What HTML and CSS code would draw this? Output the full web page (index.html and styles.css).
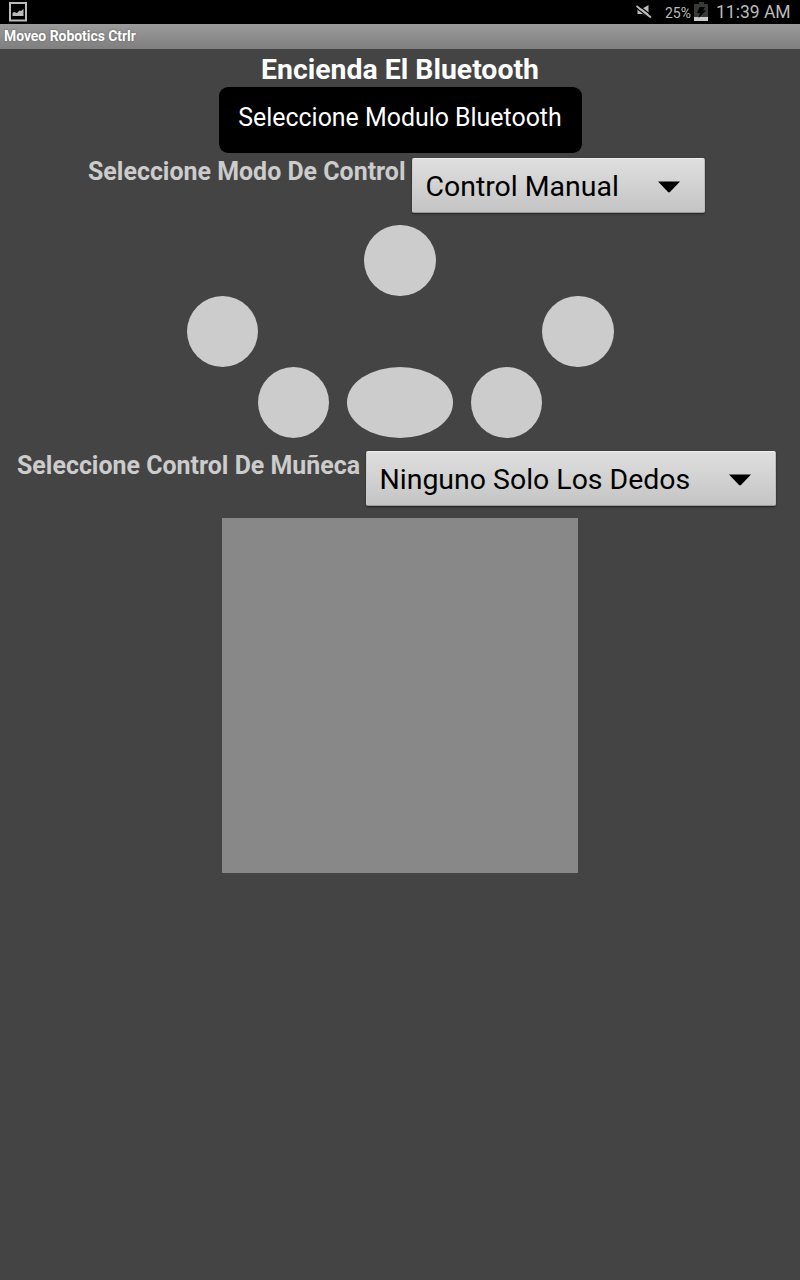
FILE: index.html
```html
<!DOCTYPE html>
<html lang="es">
<head>
<meta charset="utf-8">
<title>Moveo Robotics Ctrlr</title>
<link rel="stylesheet" href="styles.css">
</head>
<body>
<header class="status">
  <svg class="picture" width="18" height="20" viewBox="0 0 18 20"><path d="M1 1h16v17.500H1z" fill="none" stroke="#bbb" stroke-width="2"/><path d="M3.500 14v-3l1.500-1 3 1 2.500-2.500 1.500 .5 2.500-2V14z" fill="#bbb"/></svg>
  <svg class="mute" width="16" height="14" viewBox="0 0 16 14"><path d="M1.500 3.500h5l6-3.500v12.500L6.500 9h-5z" fill="#bbb"/><path d="M0 2.700l14 10.800" stroke="#000" stroke-width="1.400"/><path d="M2 0l14 10.800" stroke="#000" stroke-width="1.200"/><path d="M.5 1l14.500 11.500" stroke="#bbb" stroke-width="1.700"/></svg>
  <span class="percent">25%</span>
  <svg class="battery" width="15" height="19" viewBox="0 0 15 19"><path d="M0 2h5V0h5v2h4v17H0z" fill="#393939"/><path d="M0 15h14v4H0z" fill="#ccc"/><path d="M5.500 5H11L9 8.500h3L4.500 16l1.500-5H3z" fill="#000"/></svg>
  <span class="clock">11:39 AM</span>
</header>
<div class="titlebar">Moveo Robotics Ctrlr</div>
<main class="screen">
  <h1 class="heading">Encienda El Bluetooth</h1>
  <button class="connect">Seleccione Modulo Bluetooth</button>
  <section class="row mode">
    <span class="label">Seleccione Modo De Control</span>
    <div class="spinner"><span>Control Manual</span><svg class="arrow" width="22" height="12" viewBox="0 0 22 12"><path d="M0 .5h22L12 11q-1 .8-2 0z"/></svg></div>
  </section>
  <section class="pads">
    <div class="line"><i class="pad"></i></div>
    <div class="line outer"><i class="pad"></i><i class="pad"></i></div>
    <div class="line inner"><i class="pad"></i><i class="pad wide"></i><i class="pad"></i></div>
  </section>
  <section class="row wrist">
    <span class="label">Seleccione Control De Muñeca</span>
    <div class="spinner"><span>Ninguno Solo Los Dedos</span><svg class="arrow" width="22" height="12" viewBox="0 0 22 12"><path d="M0 .5h22L12 11q-1 .8-2 0z"/></svg></div>
  </section>
  <div class="canvas"></div>
</main>
</body>
</html>
```
FILE: styles.css
```css
* { box-sizing: border-box; }
body { margin: 0; height: 1280px; background: #444; font-family: Roboto, "Liberation Sans", sans-serif; overflow: hidden; }
.status { display: flex; height: 24px; background: #000; color: #bbb; padding: 0 10px 0 9px; white-space: nowrap; }
.picture { margin-top: 2px; }
.mute { margin: 5px 13px 0 auto; }
.percent { font-size: 14px; line-height: 26px; margin-right: 3px; width: 26px; }
.battery { margin: 2px 7px 0 0; }
.clock { font-size: 17.500px; line-height: 24px; width: 74px; }
.titlebar { height: 25px; padding-left: 4px; background: linear-gradient(#9b9b9b, #7f7f7f); color: #fff; font-size: 13.900px; font-weight: 700; line-height: 25px; text-shadow: 0 0 2px #555; }
.screen { display: flex; flex-direction: column; align-items: center; }
.heading { margin: 0; height: 38px; font-size: 28.400px; font-weight: 700; line-height: 41px; color: #fff; white-space: nowrap; }
.connect { width: 363px; height: 66px; border: 0; border-radius: 9px; background: #000; color: #fff; font-family: inherit; font-size: 24.900px; line-height: 30px; padding: 0 0 4px; white-space: nowrap; }
.row { display: flex; width: 100%; white-space: nowrap; }
.mode { height: 71.500px; padding: 4.500px 0 0 88px; }
.wrist { height: 80px; padding: 13px 0 0 17px; }
.label { width: 323.500px; color: #ccc; font-size: 24.950px; font-weight: 700; line-height: 29px; }
.mode .label { line-height: 27px; }
.wrist .label { width: 349px; }
.spinner { display: flex; justify-content: space-between; width: 293px; height: 55px; padding: 0 24px 0 13px; border: 1px solid; border-color: #eee #bbb #999 #ccc; border-radius: 2px; background: linear-gradient(#dfdfdf, #c4c4c4); box-shadow: 0 1px 2px #222; color: #000; font-size: 28.450px; line-height: 56px; }
.wrist .spinner { width: 410px; padding-left: 12.500px; }
.arrow { margin-top: 22px; }
.pads { width: 427px; }
.line { display: flex; justify-content: center; height: 71.100px; }
.outer { justify-content: space-between; }
.inner { gap: 17.800px; }
.pad { flex: none; width: 71.100px; height: 71.100px; border-radius: 50%; background: #ccc; }
.wide { width: 106.700px; }
.canvas { width: 355.600px; height: 355.600px; background: #888; }
```
